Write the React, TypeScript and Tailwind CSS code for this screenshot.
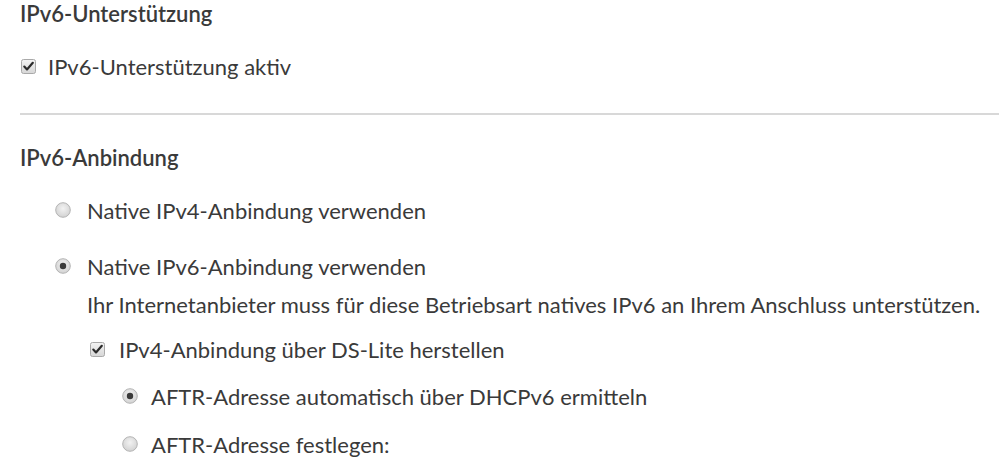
import React from "react";

function Checkbox() {
  return (
    <svg width="15" height="15" viewBox="0 0 15 15" className="shrink-0">
      <defs>
        <linearGradient id="cbg" x1="0" y1="0" x2="0" y2="1">
          <stop offset="0" stopColor="#f4f4f4" />
          <stop offset="1" stopColor="#d6d6d6" />
        </linearGradient>
      </defs>
      <rect x="0.5" y="0.5" width="14" height="14" rx="2" fill="url(#cbg)" stroke="#a9a9a9" />
      <path d="M3.3 7.6 L6 10.4 L11.8 3.8" fill="none" stroke="#2b2b2b" strokeWidth="2.2" strokeLinecap="round" strokeLinejoin="round" />
    </svg>
  );
}

function Radio({ checked }: { checked?: boolean }) {
  return (
    <svg width="16" height="16" viewBox="0 0 16 16" className="shrink-0">
      <defs>
        <radialGradient id="rbg" cx="0.5" cy="0.4" r="0.6">
          <stop offset="0" stopColor="#f2f2f2" />
          <stop offset="1" stopColor="#d2d2d2" />
        </radialGradient>
      </defs>
      <circle cx="8" cy="8" r="7.3" fill="url(#rbg)" stroke="#b4b4b4" strokeWidth="1" />
      {checked && <circle cx="8" cy="8" r="3.2" fill="#3a3a3a" />}
    </svg>
  );
}

export default function App() {
  return (
    <div
      className="w-[999px] h-[465px] overflow-hidden bg-white text-[#3a3a3a]"
      style={{ fontFamily: "Lato, 'Liberation Sans', sans-serif" }}
    >
      <div className="pl-5">
        <div className="h-[27px] flex items-center text-[22px] font-semibold">IPv6-Unterstützung</div>
        <div className="mt-[24px] h-[30px] flex items-center gap-[12px] text-[22px]">
          <span className="ml-[1px] flex"><Checkbox /></span>
          <span>IPv6-Unterstützung aktiv</span>
        </div>
        <div className="mt-[32px] h-[2px] bg-[#d8d8d8]" />
        <div className="mt-[27px] h-[30px] flex items-center text-[22px] font-semibold">IPv6-Anbindung</div>
        <div className="pl-[35px] text-[22px]">
          <div className="mt-[23px] h-[30px] flex items-center gap-[16px]">
            <Radio />
            <span>Native IPv4-Anbindung verwenden</span>
          </div>
          <div className="mt-[26px] h-[30px] flex items-center gap-[16px]">
            <Radio checked />
            <span>Native IPv6-Anbindung verwenden</span>
          </div>
          <div className="pl-[32px]">
            <div className="mt-[8px] h-[30px] flex items-center whitespace-nowrap">
              Ihr Internetanbieter muss für diese Betriebsart natives IPv6 an Ihrem Anschluss unterstützen.
            </div>
            <div className="mt-[15px] h-[30px] flex items-center gap-[14px]">
              <span className="ml-[3px] flex"><Checkbox /></span>
              <span>IPv4-Anbindung über DS-Lite herstellen</span>
            </div>
            <div className="pl-[35px]">
              <div className="mt-[17px] h-[30px] flex items-center gap-[13px]">
                <Radio checked />
                <span>AFTR-Adresse automatisch über DHCPv6 ermitteln</span>
              </div>
              <div className="mt-[18px] h-[30px] flex items-center gap-[13px]">
                <Radio />
                <span>AFTR-Adresse festlegen:</span>
              </div>
            </div>
          </div>
        </div>
      </div>
    </div>
  );
}
